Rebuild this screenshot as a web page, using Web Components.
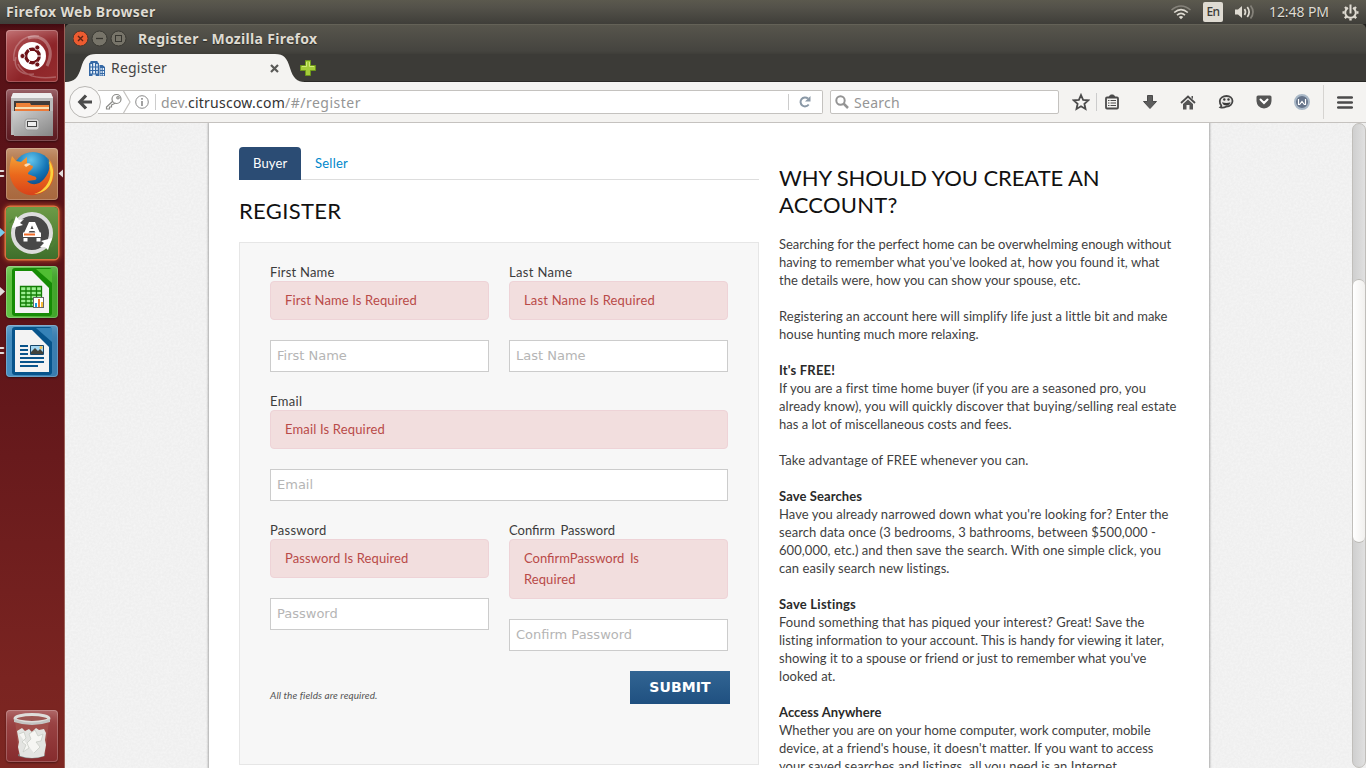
<!DOCTYPE html>
<html lang="en">
<head>
<meta charset="utf-8">
<title>Register</title>
<style>
html,body{margin:0;height:768px;overflow:hidden;background:#3c3b37}
</style>
</head>
<body>
<ubuntu-desktop></ubuntu-desktop>
<script>
const define=(name,css,html,init)=>{
  const t=document.createElement('template');
  t.innerHTML='<style>*{box-sizing:border-box}svg{display:block}'+css+'</style>'+html;
  customElements.define(name,class extends HTMLElement{
    constructor(){super();this.attachShadow({mode:'open'});}
    connectedCallback(){
      if(this.ready)return;this.ready=true;
      let src=t.innerHTML.replace(/\{\{([\w-]+)\}\}/g,(m,k)=>this.getAttribute(k)||'');
      this.shadowRoot.innerHTML=src;
      if(init)init.call(this,this.shadowRoot);
    }
  });
};

/* A run of text tracked so that it spans the width given in "w".
   With "words" only the gaps between words change, which keeps ligatures. */
define('fit-text',':host{display:inline-block;white-space:pre}span{display:inline-block}','<span><slot></slot></span>',function(r){
  const w=parseFloat(this.getAttribute('w'));
  if(!w)return;
  const s=r.querySelector('span'),text=this.textContent;
  if(this.hasAttribute('words')){
    s.style.wordSpacing=((w-s.getBoundingClientRect().width)/(text.split(' ').length-1))+'px';
    return;
  }
  s.style.fontVariantLigatures='none';
  s.style.letterSpacing=((w-s.getBoundingClientRect().width)/text.length)+'px';
});

define('top-panel',`
:host{display:flex;align-items:center;height:24px;padding:0 7px 0 6px;background:linear-gradient(#5b594e,#54524a 30%,#3f3e39);color:#dfdbd2;font:bold 14px/24px "Noto Sans",sans-serif;text-shadow:0 1px 1px #2a2925}
.right{margin-left:auto;display:flex;align-items:center}
.en{width:20px;height:20px;border-radius:2px;background:#dfdbd2;color:#3c3b37;font:500 12px/20px "Noto Sans",sans-serif;text-align:center;margin:0 12px 0 12px;text-shadow:none}
.time{font-weight:400;margin:0 13px 0 14px}
`,`
<fit-text w="149.5">Firefox Web Browser</fit-text>
<div class="right">
<svg width="20" height="16" viewBox="0 0 20 16" fill="none" stroke-width="1.6"><path d="M.5 6Q10-2 19.500 6" stroke="#85827a"/><path d="M3.200 8.500Q10 2.600 16.800 8.500M6 11.200Q10 7.600 14 11.200" stroke="#dfdbd2"/><path d="M7.800 13Q10 11 12.200 13L10 15.300z" fill="#dfdbd2"/></svg>
<div class="en"><fit-text w="13">En</fit-text></div>
<svg width="20" height="16" viewBox="0 0 20 16" fill="none" stroke-width="1.7"><path d="M0 5.500h3l4-3.500v12l-4-3.500H0z" fill="#dfdbd2"/><path d="M9.500 5Q11.500 8 9.500 11M12.300 3Q16 8 12.300 13" stroke="#dfdbd2"/><path d="M15.500 1.500Q20.500 8 15.500 14.500" stroke="#85827a"/></svg>
<fit-text class="time" w="60">12:48 PM</fit-text>
<svg width="17" height="17" viewBox="-8.500 -8.500 17 17" fill="none" stroke="#dfdbd2"><path d="M-2.500-4.700A5.300 5.300 0 1 0 2.500-4.700" stroke-width="2"/><path d="M0-8V1" stroke-width="2"/><path d="M-5.500-5.500l1.500 1.500M5.500-5.500L4-4M-8 0h2M6 0h2M-5.700 5.700l1.700-1.700M5.700 5.700L4 4M0 6v2" stroke-width="2.400"/></svg>
</div>`);

define('launcher-tile',`
:host{display:flex;position:relative;width:52px;height:52px;margin-left:6px;border-radius:4px;background:var(--tile,#8c2529);box-shadow:inset 0 0 0 1px rgba(255,255,255,.22),inset 0 14px 12px -10px rgba(255,255,255,.22),0 1px 2px rgba(0,0,0,.4)}
:host([glow]){box-shadow:0 0 0 1.500px #d9713f,0 0 5px 2px #b04a25}
.pip{position:absolute;left:-6px;top:20px}
.focus{position:absolute;right:-6px;top:20px;display:none}
:host([focused]) .focus{display:block}
.pip *{display:none}
:host([pip=two]) .two,:host([pip=one]) .one,:host([pip=blue]) .blue{display:block}
`,`<slot></slot><svg class="pip" width="6" height="12"><path class="two" d="M0 2h3.500l1 1-1 1H0zM0 7h3.500l1 1-1 1H0z" fill="#e3dcdb"/><path class="one" d="M0 1l5 4.500L0 10z" fill="#e3dcdb"/><path class="blue" d="M0 1l5 4.500L0 10z" fill="#79cbed"/></svg><svg class="focus" width="6" height="12"><path d="M5 1.500L.5 5.500 5 9.500z" fill="#e3dcdb"/></svg>`);

define('app-launcher',`
:host{display:flex;flex-direction:column;gap:7px;width:65px;padding:6px 0;background:linear-gradient(#410a10,#581217 1%,#5d1419 40%,#7a2421 88%,#7d2722);border-right:1px solid #9b6159}
.end{margin-top:auto}
`,`
<launcher-tile style="--tile:linear-gradient(135deg,#b7595b,#8d2428 60%,#952d2e)"><svg width="52" height="52" viewBox="0 0 52 52"><g fill="none" stroke="#fff"><path d="M8 31C6 16 17 4 33 6" opacity=".25" stroke-width="1.500"/><path d="M22 8C38 3 50 18 41 36" opacity=".3" stroke-width="3"/><path d="M12 34C18 47 34 49 50 47M28 44C14 46 7 37 10 27" opacity=".25" stroke-width="1.500"/></g><circle cx="26" cy="26" r="14" fill="#fff"/><circle cx="26.500" cy="26" r="6.700" fill="none" stroke="#6d1218" stroke-width="3.400"/><path d="M26.500 26L35.500 26M26.500 26L22 18M26.500 26L22 34" stroke="#fff" stroke-width="1"/><circle cx="26.500" cy="26" r="4.900" fill="#fff"/><g fill="#6d1218" stroke="#fff" stroke-width=".8"><circle cx="16.500" cy="26" r="2.500"/><circle cx="31.300" cy="17.500" r="2.500"/><circle cx="31.300" cy="34.500" r="2.500"/></g></svg></launcher-tile>
<launcher-tile style="--tile:linear-gradient(#88474d,#5b1a20)"><svg width="52" height="52" viewBox="0 0 52 52"><defs><linearGradient id="f" x2="1" y2="1"><stop stop-color="#d0d0d0"/><stop offset="1" stop-color="#858585"/></linearGradient></defs><path d="M7 4h38l2 5v37H5V9z" fill="#bbb"/><path d="M7 4h38l2 5H5z" fill="#eee"/><path d="M8 12h36v12H8z" fill="#403c3a"/><path d="M10 14h14l1 2h18v8H10z" fill="#ef8237"/><path d="M9 18h34v2H9z" fill="#f7dfb2"/><path d="M9 20h34v2H9z" fill="#ed7a38"/><path d="M6 22h41v25H8z" fill="url(#f)"/><rect x="19" y="30" width="14" height="11" rx="2.500" fill="#d7d7d7" stroke="#999"/><rect x="21.500" y="32.500" width="9" height="5" fill="#eee" stroke="#444"/></svg></launcher-tile>
<launcher-tile pip="two" focused style="--tile:linear-gradient(#b98055,#a8683e)"><svg width="52" height="52" viewBox="0 0 52 52"><defs><radialGradient id="b" cx=".45" cy=".2" r=".8"><stop stop-color="#61c4ec"/><stop offset=".5" stop-color="#1475b6"/><stop offset="1" stop-color="#0b326d"/></radialGradient><linearGradient id="o" x2="0" y2="1"><stop stop-color="#f5a437"/><stop offset=".5" stop-color="#ea681c"/><stop offset="1" stop-color="#d8431a"/></linearGradient></defs><circle cx="27" cy="24" r="20" fill="url(#b)"/><path d="M39 7C46 15 44 24 38 31 33 37 26 38 21 33l8-1c3-1 1-4-2-4l-5-2c0-3 5-4 5-8l-6-2V9l-6 5-5-1L6 8C3 18 2 27 7 36c8 14 27 15 37 2 6-8 5-20-1-27l1 7C43 12 41 9 39 7z" fill="url(#o)"/><path d="M41 12c6 11 4 22-4 29-3 3-6 4-9 5 14-1 20-12 19-24-1-4-2-7-4-9l1 6z" fill="#fbd33d"/><path d="M18 17q3-3 7-1l-5 3z" fill="#ffdbb0"/></svg></launcher-tile>
<launcher-tile pip="blue" glow style="--tile:linear-gradient(#6d9b47,#3f6f2b)"><svg width="52" height="52" viewBox="0 0 52 52"><circle cx="26" cy="26" r="18" fill="#484848"/><circle cx="26" cy="26" r="19" fill="none" stroke="#ddd" stroke-width="4"/><path d="M10 9l-4 12 11-3-3-2 4-4-5 1zM42 43l4-12-11 3 3 2-4 4h5z" fill="#fff"/><path d="M4 16l3-4M45 40l4-5" stroke="#4f8035" stroke-width="2"/><path d="M23 15h6l5 11h-4.500l-1-2h-5l-1 2H18zm3 3.500L24.500 22h3z" fill="#fff" fill-rule="evenodd"/><path d="M17 25.500h18v4.500H17z" fill="#fff"/><path d="M18 26.500h11v2H18z" fill="#f06a26"/><path d="M17.500 31h4v3.500h-4zM30.500 31h4v3.500h-4z" fill="#fff"/></svg></launcher-tile>
<launcher-tile pip="one" style="--tile:linear-gradient(90deg,#62c445,#41a32a)"><svg width="52" height="52" viewBox="0 0 52 52"><rect x="6" y="2" width="40" height="48" rx="3" fill="#168b05"/><path d="M9 5h17l17 17v25H9z" fill="#f3f3f3"/><path d="M30 3h16v14z" fill="#50bd33"/><path d="M14 20h22v21H14z" fill="#9cee91"/><path d="M14.500 20.500h21v20h-21zM20 20v21M25 20v21M30.500 20v21M14 25h22M14 29h22M14 33h22M14 37h22" fill="none" stroke="#127d05" stroke-width="1.300"/><rect x="27.500" y="31.500" width="10" height="10" fill="#fff" stroke="#666"/><path d="M29 37h2v4h-2z" fill="#1a98dd"/><path d="M32 33h2v8h-2z" fill="#ef7629"/><path d="M35 36h2v5h-2z" fill="#f5bb37"/></svg></launcher-tile>
<launcher-tile pip="two" style="--tile:linear-gradient(90deg,#468fc1,#397caf)"><svg width="52" height="52" viewBox="0 0 52 52"><rect x="6" y="2" width="40" height="48" rx="3" fill="#07548b"/><path d="M9 5h17l17 17v25H9z" fill="#f3f3f3"/><path d="M30 3h16v14z" fill="#3682b7"/><path d="M14 20h8v2h-8zM14 24h8v2h-8zM14 28h8v2h-8zM14 32h24v2H14zM14 36h24v2H14zM14 40h18v2H14z" fill="#0a548b"/><path d="M24.500 20.500h13v9h-13z" fill="#a4d7f3" stroke="#17466a"/><path d="M25 29v-2l4-4 3 3 2-2 3 3v2z" fill="#41423b"/><circle cx="35" cy="22.500" r="1.500" fill="#f5c04e"/></svg></launcher-tile>
<launcher-tile class="end" style="--tile:linear-gradient(#a04a4a,#862b2d)"><svg width="52" height="52" viewBox="0 0 52 52"><path d="M9 10l4 36q13 4 26 0l4-36z" fill="#a65752" opacity=".65"/><path d="M12 44q14 6 27 0v2q-13 5-27 0z" fill="#777"/><path d="M11 21l5-3 3 3 4-2 3 3 4-4 3 2 5-1 2 4-1 7 1 5-2 11q-12 4-24 0l-2-9 1-5z" fill="#e3e4e1"/><path d="M13 24l5-2 2 6-4 4 4 3-3 7 6-4-2-5 4-4-2-5 6-4 3 6 5-2-2 7-5 1 4 5-6 6" fill="#f6f6f3" stroke="#c4c8c1" stroke-width=".7"/><ellipse cx="26" cy="8.500" rx="17" ry="4" fill="#9c5652" stroke="#deddda" stroke-width="3"/><path d="M8 9v3q18 6 36 0V9q-18 7-36 0" fill="#c4c4c2"/></svg></launcher-tile>
`);

define('title-bar',`
:host{display:flex;align-items:center;height:30px;padding:0 8px;border-radius:5px 5px 0 0;background:linear-gradient(#6c6a5f,#57554c 4%,#45443f 90%,#3f3e39);color:#dfdbd2;font:bold 14px/28px "Noto Sans",sans-serif;text-shadow:0 1px 1px #2a2925}
svg{margin:-1px 12px 0 0}
`,`<svg width="54" height="17" viewBox="0 0 54 17" fill="none"><circle cx="7.500" cy="8.500" r="7.500" fill="#ec5b30" stroke="#47362c"/><path d="M5 6l5 5M10 6l-5 5" stroke="#5d2415" stroke-width="1.400"/><circle cx="26.500" cy="8.500" r="7.500" fill="#777469" stroke="#393832"/><path d="M23 8.500h7" stroke="#36352f" stroke-width="1.300"/><circle cx="45.500" cy="8.500" r="7.500" fill="#777469" stroke="#393832"/><rect x="42.500" y="5.500" width="6" height="6" stroke="#36352f"/></svg><fit-text w="179.500" style="margin-left:-1px">Register - Mozilla Firefox</fit-text>`);

define('tab-strip',`
:host{display:grid;height:28px;background:#3c3b37;border-bottom:1px solid #2a2926}
:host>*{grid-area:1/1}
.row{display:flex;align-items:center;padding-left:24px;z-index:1;font:14px/26px "Noto Sans",sans-serif;color:#444}
.x{margin:0 21px 0 103px}
`,`
<svg width="240" height="28"><path d="M0 28C10 28 13 23 16 14 19 4 22 0 31 0H210C219 0 222 4 225 14 228 24 232 28 240 28z" fill="#f4f3f1"/></svg>
<div class="row">
<svg width="16" height="16" viewBox="0 0 16 16"><path d="M0 3.500L1.500 2V1h7v1L10 3.500V16H0zM10.500 5h3l2.500 2v9h-5.500z" fill="#3468a5"/><path d="M1.500 4H3v2.500H1.500zM4.200 3H6v3.500H4.200zM7.200 4h1.500v2.500H7.200zM1.500 7.500H3V10H1.500zM4.200 7.500H6V10H4.200zM7.200 7.500h1.500V10H7.200zM1.500 11H3v2.500H1.500zM4.200 11H6v2.500H4.200zM7.200 11h1.500v2.500H7.200zM3.500 14.500h3.200V16H3.500zM11.500 8h1.200v2h-1.200zM13.700 8H15v2h-1.300zM11.500 11h1.200v2h-1.200zM13.700 11H15v2h-1.300zM11.500 14h1.200v1.500h-1.200zM13.700 14H15v1.500h-1.300z" fill="#e8f1fa"/></svg>
<fit-text w="56" style="margin-left:6px">Register</fit-text>
<svg class="x" width="9" height="9" viewBox="0 0 9 9"><path d="M1 1l7 7M8 1L1 8" stroke="#595957" stroke-width="2.200"/></svg>
<svg width="16" height="16" viewBox="0 0 16 16"><path d="M5.500.5h5v5h5v5h-5v5h-5v-5h-5v-5h5z" fill="#a5cc3a" stroke="#6c961a"/><path d="M6.500 2v4.500H2M9.500 2v4.500H14" stroke="#d2eb79" fill="none"/></svg>
</div>`);

define('nav-bar',`
:host{display:flex;align-items:center;height:41px;padding:0 12px 0 4px;background:#f4f3f1;border-bottom:1px solid #c5c2bf;font:14px/22px "Noto Sans",sans-serif;color:#959595}
.back{width:32px;height:32px;border-radius:50%;background:#f8f7f6;border:1px solid #b9b7b4;display:grid;place-items:center;z-index:1;flex:none}
.url{display:flex;align-items:center;width:725px;height:24px;margin-left:-3px;background:#fff;border:1px solid #c4c2bf;border-left:0;border-radius:0 2px 2px 0;flex:none}
.url fit-text,.search fit-text{padding-top:1px}
.sep{width:1px;height:16px;background:#ccc}
b{font-weight:400;color:#333}
.search{display:flex;align-items:center;width:229px;height:24px;margin:0 13px 0 7px;padding-left:4px;background:#fff;border:1px solid #c4c2bf;border-radius:2px;flex:none}
.tall{width:1px;height:34px;background:#d6d4d1;margin:0 13px 0 13px}
.icons{display:flex;align-items:center;flex:none}
`,`
<div class="back"><svg width="16" height="16" viewBox="0 0 16 16" fill="none" stroke="#4b4b4b" stroke-width="3.200"><path d="M9 1.500L2.800 8 9 14.500M3 8h12"/></svg></div>
<div class="url">
<svg style="margin-left:7px" width="28" height="22" viewBox="0 0 28 22" fill="none" stroke="#8b8b88" stroke-width="1.200"><circle cx="11.500" cy="8" r="4.500"/><circle cx="13" cy="6.800" r="1.200"/><path d="M8 10L1.500 16v2h3v-2h2v-2l4-2"/><path d="M18.500 0l6.500 11-6.500 11" stroke="#c4c2bf"/></svg>
<svg style="margin:0 6px 0 2px" width="14" height="14" viewBox="0 0 14 14" fill="none" stroke="#8a8a8a"><circle cx="7" cy="7" r="6.300"/><path d="M7 6v5M7 3v1.700" stroke-width="1.600"/></svg>
<div class="sep"></div><fit-text w="27" style="margin-left:5px">dev.</fit-text><b><fit-text w="97">citruscow.com</fit-text></b><fit-text w="76">/#/register</fit-text>
<div class="sep" style="margin-left:auto"></div><svg style="margin:0 11px 0 10px" width="12" height="12" viewBox="0 0 12 12"><path d="M9.700 8.500A4.500 4.500 0 1 1 9 2.500" fill="none" stroke="#8a98a6" stroke-width="2"/><path d="M11.500 0v5.500H6z" fill="#8a98a6"/></svg>
</div>
<div class="search"><svg width="14" height="14" viewBox="0 0 14 14" fill="none" stroke="#949494" stroke-width="2"><circle cx="5.500" cy="5.500" r="4.200"/><path d="M8.500 8.500l4.500 4.500" stroke-width="2.500"/></svg><fit-text w="46" style="margin-left:5px">Search</fit-text></div>
<div class="icons">
<svg width="18" height="18" viewBox="0 0 18 18"><path d="M9 2l2.100 4.800 5.200.5-3.900 3.500 1.100 5.200L9 13.300 4.500 16l1.100-5.200-3.900-3.500 5.200-.5z" fill="none" stroke="#4b4b4b" stroke-width="1.800"/></svg>
<div class="sep" style="height:18px;margin:0 8px 0 6px"></div>
<svg width="14" height="16" viewBox="0 0 14 16"><rect x="1" y="3.500" width="12" height="11" rx="1" fill="none" stroke="#4b4b4b" stroke-width="1.800"/><path d="M4 3l1.500-2h3L10 3z" fill="#4b4b4b" stroke="#4b4b4b"/><path d="M3 6.500h1.500M5.500 6.500H11M3 9h1.500M5.500 9H11M3 11.500h1.500M5.500 11.500H11" stroke="#4b4b4b" stroke-width="1.200"/></svg>
<svg style="margin-left:24px" width="14" height="14" viewBox="0 0 14 14"><path d="M4.500.5h5V6.500H13.500L7 13.500.5 6.500h4z" fill="#5d5d5d" stroke="#4b4b4b"/></svg>
<svg style="margin-left:23px" width="16" height="15" viewBox="0 0 16 15"><path d="M1 8l7-6.500L15 8" fill="none" stroke="#4b4b4b" stroke-width="1.800"/><path d="M3 9l5-4.500L13 9v5.500H9.500V10h-3v4.500H3zM11.500 1H13v3l-1.500-1z" fill="#555"/></svg>
<svg style="margin-left:22px" width="16" height="14" viewBox="0 0 16 14"><path d="M8.500 1C12 1 14.500 3 14.500 6s-2.500 5.500-6 5.500c-2 1-4 1.500-6 .8C3.500 11.500 3.500 10.800 3 10 1.800 9 1.800 7 1.800 6 1.800 3 5 1 8.500 1z" fill="#e9e8e6" stroke="#454545" stroke-width="1.800"/><path d="M4 7.200q4.500 1.500 8.500 0-1 3.300-4.200 3.300T4 7.200z" fill="#3a3a3a"/><circle cx="6.300" cy="4.500" r="1.200" fill="#3a3a3a"/><circle cx="10.500" cy="4.500" r="1.200" fill="#3a3a3a"/></svg>
<svg style="margin-left:22px" width="16" height="14" viewBox="0 0 16 14"><path d="M2 .5h12q1.500 0 1.500 1.500v4q-.5 7-7.500 7.500Q1 13 .5 6V2Q.5.500 2 .5z" fill="#555"/><path d="M4.500 4.500L8 8l3.500-3.500" fill="none" stroke="#fff" stroke-width="2" stroke-linecap="round"/></svg>
<svg style="margin-left:22px" width="16" height="16" viewBox="0 0 16 16"><circle cx="8" cy="8" r="7" fill="#66748a" stroke="#a9b8c7" stroke-width="2"/><path d="M4.500 5v5.500h1.200L8 7.500l2.300 3h1.200V5" fill="none" stroke="#fff" stroke-width="1.200"/></svg>
<div class="tall"></div>
<svg width="16" height="13" viewBox="0 0 16 13"><path d="M1.200 1.500h13.600M1.200 6.500h13.600M1.200 11.500h13.600" stroke="#4b4b4b" stroke-width="2.600" stroke-linecap="round"/></svg>
</div>`);

define('form-field',`
:host{display:block;min-width:0}
label{display:block;height:18px;line-height:18px;color:#3c3c3c}
.alert{padding:8px 14px;border:1px solid #eed3d7;border-radius:4px;background:#f2dede;color:#b94a48;line-height:21px;margin-bottom:20px}
input{display:block;width:100%;height:32px;margin:0;padding:0 6px 2px;border:1px solid #ccc;border-radius:0;background:#fff;font:13px "DejaVu Sans",sans-serif}
input::placeholder{color:#b5b5b5;opacity:1}
`,`<label>{{label}}</label><div class="alert"><slot></slot></div><input placeholder="{{label}}" aria-label="{{label}}">`,function(r){
  const l=r.querySelector('label'),w=this.getAttribute('lw'),words=this.getAttribute('label').includes('fi')?' words':'';
  l.innerHTML='<fit-text w="'+w+'"'+words+'>'+l.textContent+'</fit-text>';
});

define('register-form',`
:host{display:block;width:520px}
nav{display:flex;height:33px;line-height:33px;border-bottom:1px solid #ddd}
nav a{height:33px;padding:0 14px;color:#0088cc}
nav a.on{background:#2b4c74;color:#fff;border-radius:4px 4px 0 0;width:62px}
h2{margin:17px 0 18px;font:400 22px/27px Lato,sans-serif;color:#111}
form{height:523px;padding:20px 30px 0;background:#f7f7f7;border:1px solid #e6e6e6;margin:0}
.grid{display:grid;grid-template-columns:219px 219px;gap:20px;align-items:start}
.wide{grid-column:1/3}
.foot{display:flex;align-items:flex-start;margin:20px -2px 0 0}
em{font-size:10px;line-height:18px;margin-top:15px;color:#555}
button{margin:0 0 0 auto;width:100px;height:33px;border:0;padding:0 0 2px;background:linear-gradient(#326593,#1f5080);color:#fff;font:bold 14px "DejaVu Sans",sans-serif}
`,`
<nav><a class="on"><fit-text w="34.500">Buyer</fit-text></a><a><fit-text w="33">Seller</fit-text></a></nav>
<h2><fit-text w="102.500">REGISTER</fit-text></h2>
<form>
<div class="grid">
<form-field label="First Name" lw="64.500"><fit-text w="132">First Name Is Required</fit-text></form-field>
<form-field label="Last Name" lw="63.500"><fit-text w="131">Last Name Is Required</fit-text></form-field>
<form-field class="wide" label="Email" lw="32.500"><fit-text w="100">Email Is Required</fit-text></form-field>
<form-field label="Password" lw="56.500"><fit-text w="123.500">Password Is Required</fit-text></form-field>
<form-field label="Confirm Password" lw="106"><fit-text w="115" words>ConfirmPassword Is</fit-text><br><fit-text w="51.500">Required</fit-text></form-field>
</div>
<div class="foot"><em><fit-text w="107.500">All the fields are required.</fit-text></em><button type="button"><fit-text w="61.500">SUBMIT</fit-text></button></div>
</form>`);

define('why-article',`
:host{display:block;width:400px;padding-top:17px;line-height:18px;white-space:nowrap;color:#3f3f3f}
h2{margin:0 0 17px;font:400 22px/27px Lato,sans-serif;color:#111}
p{margin:0 0 18px}
fit-text{display:block}
b{color:#2a2a2a}
`,`
<h2><fit-text w="320.500">WHY SHOULD YOU CREATE AN</fit-text><fit-text w="118.500">ACCOUNT?</fit-text></h2>
<p><fit-text w="392">Searching for the perfect home can be overwhelming enough without</fit-text><fit-text w="380.500">having to remember what you've looked at, how you found it, what</fit-text><fit-text w="301.500">the details were, how you can show your spouse, etc.</fit-text></p>
<p><fit-text w="388.500">Registering an account here will simplify life just a little bit and make</fit-text><fit-text w="199.500">house hunting much more relaxing.</fit-text></p>
<p><b><fit-text w="56">It's FREE!</fit-text></b><fit-text w="367">If you are a first time home buyer (if you are a seasoned pro, you</fit-text><fit-text w="397.500">already know), you will quickly discover that buying/selling real estate</fit-text><fit-text w="232.500">has a lot of miscellaneous costs and fees.</fit-text></p>
<p><fit-text w="249.500">Take advantage of FREE whenever you can.</fit-text></p>
<p><b><fit-text w="83">Save Searches</fit-text></b><fit-text w="389.500">Have you already narrowed down what you're looking for? Enter the</fit-text><fit-text w="377">search data once (3 bedrooms, 3 bathrooms, between $500,000 -</fit-text><fit-text w="382">600,000, etc.) and then save the search. With one simple click, you</fit-text><fit-text w="170.500">can easily search new listings.</fit-text></p>
<p><b><fit-text w="77">Save Listings</fit-text></b><fit-text w="365.500">Found something that has piqued your interest? Great! Save the</fit-text><fit-text w="385">listing information to your account. This is handy for viewing it later,</fit-text><fit-text w="367.500">showing it to a spouse or friend or just to remember what you've</fit-text><fit-text w="56.500">looked at.</fit-text></p>
<p><b><fit-text w="102.500">Access Anywhere</fit-text></b><fit-text w="371.500">Whether you are on your home computer, work computer, mobile</fit-text><fit-text w="374.500">device, at a friend's house, it doesn't matter. If you want to access</fit-text><fit-text w="338">your saved searches and listings, all you need is an Internet</fit-text></p>
`);

define('scroll-bar',`
:host{display:block;width:14px;padding:155px 0 0 0;border:1px solid #c0beba;border-radius:7px;background:linear-gradient(90deg,#cfcfcf,#e0e0e0)}
div{height:264px;border-radius:7px;border:1px solid #bcbab6;border-width:1px 0;background:linear-gradient(90deg,#fff,#f1f0ee)}
`,'<div></div>');

define('page-view',`
:host{display:grid;grid-template-columns:1287px 14px;height:645px;overflow:hidden;background:#f0f0f0;font:13px/18px Lato,sans-serif;color:#333}
:host>*{grid-row:1}
.noise{grid-column:1;width:1287px;height:645px}
.sheet{grid-column:1;display:flex;gap:20px;width:1000px;height:645px;margin-left:144px;padding:24px 30px 0;background:#fff;box-shadow:0 0 2px 1px rgba(0,0,0,.3);overflow:hidden;align-items:flex-start;z-index:1}
scroll-bar{grid-column:2}
`,`
<svg class="noise" width="1287" height="645"><filter id="n" x="0" y="0" width="100%" height="100%"><feTurbulence type="fractalNoise" baseFrequency=".45" numOctaves="2"/><feColorMatrix values="0 0 0 0 1  0 0 0 0 1  0 0 0 0 1  1.600 0 0 0 -.5"/></filter><rect width="100%" height="100%" fill="#efefef"/><rect width="100%" height="100%" filter="url(#n)" opacity=".4"/></svg>
<div class="sheet"><register-form></register-form><why-article></why-article></div>
<scroll-bar></scroll-bar>`);

define('browser-window',':host{display:flex;flex-direction:column;width:1301px;background:#201f1d}','<title-bar></title-bar><tab-strip></tab-strip><nav-bar></nav-bar><page-view></page-view>');
define('ubuntu-desktop',':host{display:flex;flex-direction:column;width:1366px;height:768px;overflow:hidden}.main{display:flex;height:744px}','<top-panel></top-panel><div class="main"><app-launcher></app-launcher><browser-window></browser-window></div>');
</script>
</body>
</html>
